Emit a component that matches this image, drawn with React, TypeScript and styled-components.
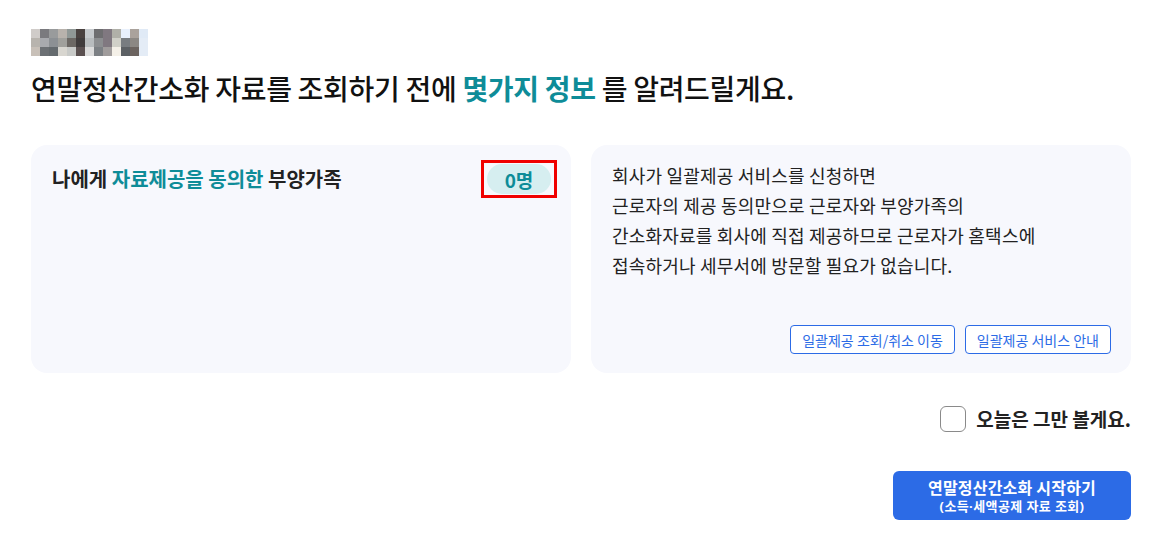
import React from 'react';
import styled, { createGlobalStyle } from 'styled-components';

const GlobalStyle = createGlobalStyle`
  body {
    margin: 0;
    background: #ffffff;
    font-family: "Noto Sans CJK KR", "Noto Sans", sans-serif;
    color: #1a1a1a;
  }
`;

const Page = styled.main`
  box-sizing: border-box;
  width: 1100px;
  margin-left: 31px;
  padding-top: 29px;
  display: flex;
  flex-direction: column;
`;

const BlurredLogo = styled.div`
  display: grid;
  grid-template-columns: repeat(13, 9px);
  grid-auto-rows: 9px;
  width: 117px;
`;

const BlurCell = styled.span<{ $c: string }>`
  background: ${({ $c }) => $c};
`;

const Heading = styled.h1`
  margin: 14px 0 0;
  font-size: 28px;
  line-height: 36px;
  font-weight: 500;
  letter-spacing: -0.3px;
  color: #111;
`;

const Accent = styled.span<{ $bold?: boolean }>`
  color: #0e8c98;
  font-weight: ${({ $bold }) => ($bold ? 700 : 'inherit')};
`;

const CardRow = styled.section`
  display: grid;
  grid-template-columns: 1fr 1fr;
  gap: 20px;
  margin-top: 39px;
`;

const Card = styled.div`
  box-sizing: border-box;
  height: 228px;
  background: #f7f8fd;
  border-radius: 16px;
  padding: 15px 20px 19px 21px;
  display: flex;
  flex-direction: column;
`;

const CardHeader = styled.div`
  display: flex;
  justify-content: space-between;
  align-items: center;
`;

const CardTitle = styled.h2`
  margin: 0;
  font-size: 20px;
  line-height: 30px;
  font-weight: 600;
  color: #222;
`;

const BadgeFrame = styled.div`
  box-sizing: border-box;
  width: 76px;
  height: 38px;
  margin-right: -6px;
  border: 3px solid #f00000;
  display: flex;
  align-items: center;
  justify-content: center;
`;

const Badge = styled.span`
  display: inline-flex;
  align-items: center;
  justify-content: center;
  width: 64px;
  height: 30px;
  border-radius: 15px;
  background: #d6eef0;
  color: #0e8c98;
  font-size: 19px;
  font-weight: 700;
`;

const InfoText = styled.p`
  margin: 0;
  font-size: 18px;
  line-height: 30px;
  letter-spacing: 0.2px;
  color: #222;
  flex: 1;
`;

const LinkRow = styled.div`
  display: flex;
  justify-content: flex-end;
  gap: 10px;
`;

const LinkButton = styled.button`
  box-sizing: border-box;
  height: 29px;
  padding: 0 11px;
  border: 1px solid #2c6be6;
  border-radius: 4px;
  background: #ffffff;
  color: #2c6be6;
  font-family: inherit;
  font-size: 14px;
  cursor: pointer;
`;

const CheckRow = styled.label`
  align-self: flex-end;
  display: flex;
  align-items: center;
  gap: 10px;
  margin-top: 32px;
  font-size: 19px;
  font-weight: 600;
  color: #222;
  cursor: pointer;
`;

const CheckBox = styled.span`
  box-sizing: border-box;
  width: 26px;
  height: 26px;
  border: 1px solid #8a8a8a;
  border-radius: 6px;
  background: #fff;
`;

const StartButton = styled.button`
  align-self: flex-end;
  box-sizing: border-box;
  width: 238px;
  height: 49px;
  margin-top: 39px;
  border: none;
  border-radius: 6px;
  background: #2c6be6;
  color: #ffffff;
  font-family: inherit;
  display: flex;
  flex-direction: column;
  align-items: center;
  justify-content: center;
  cursor: pointer;
`;

const StartMain = styled.span`
  font-size: 16px;
  line-height: 21px;
  font-weight: 700;
  letter-spacing: 0.2px;
`;

const StartSub = styled.span`
  font-family: "Noto Sans", "Noto Sans CJK KR", sans-serif;
  font-size: 13px;
  line-height: 17px;
  font-weight: 700;
  letter-spacing: 0.4px;
`;

const blurRows = [
  ['#d0ccc9', '#7a7a7e', '#999b9c', '#b8b2ac', '#909896', '#4a4240', '#c6cacd', '#6e6e70', '#807880', '#b0b0a8', '#e8f0fc', '#aaa29c', '#e0eaf6'],
  ['#b8b4ae', '#a8aaae', '#8c9094', '#a0a09c', '#6c6864', '#403c3c', '#b8bcbe', '#8c8e90', '#807880', '#d0d0c8', '#787c80', '#8c8884', '#e4ecf6'],
  ['#c8c0b8', '#6c7074', '#646a6e', '#d8d6d0', '#c8cac8', '#5a5050', '#dcdcdc', '#7c8084', '#a09c9c', '#f4f0e8', '#5c6064', '#6c6460', '#e4ecf6'],
];

const infoLines = [
  '회사가 일괄제공 서비스를 신청하면',
  '근로자의 제공 동의만으로 근로자와 부양가족의',
  '간소화자료를 회사에 직접 제공하므로 근로자가 홈택스에',
  '접속하거나 세무서에 방문할 필요가 없습니다.',
];

export default function App() {
  return (
    <>
      <GlobalStyle />
      <Page>
        <BlurredLogo aria-hidden>
          {blurRows.flat().map((c, i) => (
            <BlurCell key={i} $c={c} />
          ))}
        </BlurredLogo>
        <Heading>
          연말정산간소화 자료를 조회하기 전에 <Accent $bold>몇가지 정보</Accent> 를 알려드릴게요.
        </Heading>

        <CardRow>
          <Card>
            <CardHeader>
              <CardTitle>
                나에게 <Accent>자료제공을 동의한</Accent> 부양가족
              </CardTitle>
              <BadgeFrame>
                <Badge>0명</Badge>
              </BadgeFrame>
            </CardHeader>
          </Card>
          <Card>
            <InfoText>
              {infoLines.map((line, i) => (
                <React.Fragment key={i}>
                  {line}
                  <br />
                </React.Fragment>
              ))}
            </InfoText>
            <LinkRow>
              <LinkButton>일괄제공 조회/취소 이동</LinkButton>
              <LinkButton>일괄제공 서비스 안내</LinkButton>
            </LinkRow>
          </Card>
        </CardRow>

        <CheckRow>
          <CheckBox />
          오늘은 그만 볼게요.
        </CheckRow>

        <StartButton>
          <StartMain>연말정산간소화 시작하기</StartMain>
          <StartSub>(소득·세액공제 자료 조회)</StartSub>
        </StartButton>
      </Page>
    </>
  );
}
